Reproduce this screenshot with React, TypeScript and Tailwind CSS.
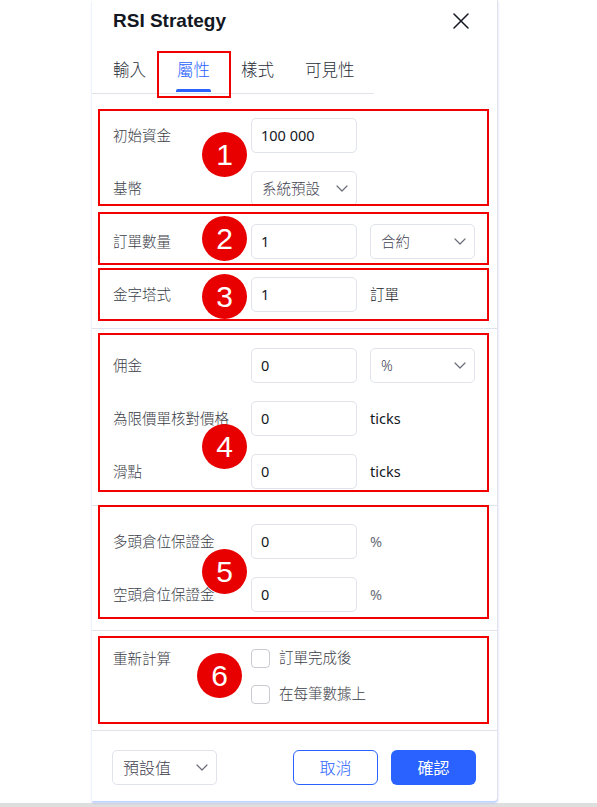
import React from 'react';

const font = "font-['Noto_Sans','Noto_Sans_CJK_TC',sans-serif]";

function Chevron() {
  return (
    <svg width="12" height="7" viewBox="0 0 12 7" fill="none" stroke="#6a6d78" strokeWidth="1.2" strokeLinecap="round" strokeLinejoin="round">
      <polyline points="1,1 6,6 11,1" />
    </svg>
  );
}

function TextInput({ value }: { value: string }) {
  return (
    <div className="w-[106px] h-[35px] rounded-[5px] border border-[#e0e3eb] flex items-center px-[9px] text-[14.5px] text-[#131722]">
      {value}
    </div>
  );
}

function Select({ value, width = 'w-[105px]', size = 'text-[14.5px]' }: { value: string; width?: string; size?: string }) {
  return (
    <div className={`${width} ${size} h-[35px] rounded-[5px] border border-[#e0e3eb] flex items-center justify-between pl-[10px] pr-[8px] font-light text-[#3f4250]`}>
      <span>{value}</span>
      <Chevron />
    </div>
  );
}

function Row({ label, children }: { label: string; children?: React.ReactNode }) {
  return (
    <div className="grid grid-cols-[125px_106px_105px] gap-x-[13px] h-[35px] items-center">
      <span className="text-[14.5px] font-light text-[#3b3e48] whitespace-nowrap">{label}</span>
      {children}
    </div>
  );
}

function Checkbox({ label }: { label: string }) {
  return (
    <div className="flex items-center h-[18px] gap-[9px]">
      <div className="w-[19px] h-[19px] rounded-[4px] border border-[#c9cbd1] bg-white" />
      <span className="text-[14.5px] font-light text-[#3b3e48]">{label}</span>
    </div>
  );
}

function Marker({ n, className }: { n: number; className: string }) {
  return (
    <div className={`absolute w-[45px] h-[45px] rounded-full bg-[#e80000] flex items-center justify-center text-white text-[30px] font-['Liberation_Sans',sans-serif] ${className}`}>
      {n}
    </div>
  );
}

const tabs = ['輸入', '屬性', '樣式', '可見性'];

export default function App() {
  return (
    <div className={`w-[597px] h-[807px] bg-white flex flex-col overflow-hidden ${font}`}>
      <div className="flex flex-1">
        <div className="w-[92px]" />
        <div className="relative w-[406px] h-[801px] bg-white border-r border-[#e0e3eb] rounded-br-[4px] shadow-[0_2px_2px_rgba(41,98,255,0.3)] flex flex-col">
          {/* Header */}
          <div className="h-[42px] flex items-center justify-between pl-[21px] pr-[28px]">
            <span className="text-[19px] font-bold text-[#131722] font-['Liberation_Sans',sans-serif]">RSI Strategy</span>
            <svg width="16" height="16" viewBox="0 0 16 16" fill="none" stroke="#131722" strokeWidth="1.5" strokeLinecap="round">
              <path d="M1 1L15 15M15 1L1 15" />
            </svg>
          </div>

          {/* Tabs */}
          <div className="w-[282px] h-[52px] border-b border-[#e0e3eb] pl-[21px] flex items-end gap-[31px]">
            {tabs.map((t, i) => (
              <div key={t} className="flex flex-col items-stretch">
                <span className={`text-[16.5px] leading-[22px] font-light ${i === 1 ? 'text-[#2962ff]' : 'text-[#2a2e39]'}`}>{t}</span>
                <div className={`mt-[8px] -mx-[1px] h-[3px] rounded-t-[2px] ${i === 1 ? 'bg-[#2962ff]' : 'bg-transparent'}`} />
                <div className="h-[1px]" />
              </div>
            ))}
          </div>

          {/* Initial capital / quantity / pyramiding */}
          <div className="px-[21px] pt-[24px] pb-[16px] flex flex-col gap-[18px] border-b border-[#e0e3eb]">
            <Row label="初始資金">
              <TextInput value="100 000" />
            </Row>
            <Row label="基幣">
              <Select value="系統預設" width="w-[106px]" />
            </Row>
            <Row label="訂單數量">
              <TextInput value="1" />
              <Select value="合約" />
            </Row>
            <Row label="金字塔式">
              <TextInput value="1" />
              <span className="text-[14.5px] font-light text-[#131722]">訂單</span>
            </Row>
          </div>

          {/* Commission / slippage */}
          <div className="px-[21px] pt-[19px] pb-[16px] flex flex-col gap-[18px] border-b border-[#e0e3eb]">
            <Row label="佣金">
              <TextInput value="0" />
              <Select value="%" />
            </Row>
            <Row label="為限價單核對價格">
              <TextInput value="0" />
              <span className="text-[14.5px] text-[#131722]">ticks</span>
            </Row>
            <Row label="滑點">
              <TextInput value="0" />
              <span className="text-[14.5px] text-[#131722]">ticks</span>
            </Row>
          </div>

          {/* Margin */}
          <div className="px-[21px] pt-[18px] pb-[18px] flex flex-col gap-[18px] border-b border-[#e0e3eb]">
            <Row label="多頭倉位保證金">
              <TextInput value="0" />
              <span className="text-[14.5px] text-[#6a6d78]">%</span>
            </Row>
            <Row label="空頭倉位保證金">
              <TextInput value="0" />
              <span className="text-[14.5px] text-[#6a6d78]">%</span>
            </Row>
          </div>

          {/* Recalculate */}
          <div className="px-[21px] pt-[18px] pb-[27px] grid grid-cols-[138px_1fr] border-b border-[#e0e3eb]">
            <span className="text-[14.5px] leading-[18px] font-light text-[#3b3e48]">重新計算</span>
            <div className="flex flex-col gap-[18px]">
              <Checkbox label="訂單完成後" />
              <Checkbox label="在每筆數據上" />
            </div>
          </div>

          {/* Footer */}
          <div className="flex items-center pl-[20px] pr-[21px] pt-[19px]">
            <Select value="預設值" size="text-[16px]" />
            <div className="ml-auto flex gap-[13px]">
              <button className="w-[85px] h-[35px] rounded-[6px] border border-[#2962ff] text-[#2962ff] text-[16px] font-light bg-white">取消</button>
              <button className="w-[85px] h-[35px] rounded-[6px] bg-[#2962ff] text-white text-[16px]">確認</button>
            </div>
          </div>

          {/* Annotations */}
          <div className="absolute left-[65px] top-[51px] w-[74px] h-[47px] border-2 border-[#f00000]" />
          <div className="absolute left-[6px] top-[109px] w-[391px] h-[97px] border-2 border-[#f00000]" />
          <div className="absolute left-[6px] top-[212px] w-[391px] h-[53px] border-2 border-[#f00000]" />
          <div className="absolute left-[6px] top-[268px] w-[391px] h-[53px] border-2 border-[#f00000]" />
          <div className="absolute left-[6px] top-[333px] w-[391px] h-[159px] border-2 border-[#f00000]" />
          <div className="absolute left-[6px] top-[505px] w-[391px] h-[114px] border-2 border-[#f00000]" />
          <div className="absolute left-[6px] top-[636px] w-[391px] h-[88px] border-2 border-[#f00000]" />
          <Marker n={1} className="left-[110px] top-[132px]" />
          <Marker n={2} className="left-[110px] top-[216px]" />
          <Marker n={3} className="left-[110px] top-[274px]" />
          <Marker n={4} className="left-[110px] top-[424px]" />
          <Marker n={5} className="left-[110px] top-[549px]" />
          <Marker n={6} className="left-[105px] top-[653px]" />
        </div>
        <div className="flex-1" />
      </div>
      <div className="h-[4px] bg-[#dedede]" />
    </div>
  );
}
